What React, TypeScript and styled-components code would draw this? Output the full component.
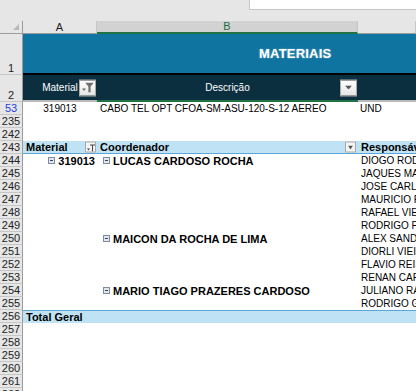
import React from "react";
import styled, { createGlobalStyle, css } from "styled-components";

const GlobalStyle = createGlobalStyle`
  html, body {
    margin: 0;
    padding: 0;
    background: #ffffff;
    overflow: hidden;
  }
  body {
    font-family: "Liberation Sans", Arial, sans-serif;
  }
`;

const COLS = "23px 74px 261px 1fr";

const Window = styled.div`
  width: 416px;
  height: 391px;
  overflow: hidden;
  background: #ffffff;
`;

const TopBar = styled.div`
  height: 21px;
  background: #e6e6e6;
  display: flex;
  justify-content: flex-end;
`;

const FormulaBox = styled.div`
  width: 166px;
  height: 9px;
  background: #ffffff;
  border-left: 1px solid #c6c6c6;
  border-bottom: 1px solid #c6c6c6;
`;

const ColHeaderRow = styled.div`
  display: grid;
  grid-template-columns: ${COLS};
  height: 12px;
  background: #e6e6e6;
`;

const Corner = styled.div`
  position: relative;
  border-right: 1px solid #9b9b9b;
  border-bottom: 1px solid #9b9b9b;
  &::after {
    content: "";
    position: absolute;
    right: 3px;
    bottom: 3px;
    border-style: solid;
    border-width: 0 0 6px 6px;
    border-color: transparent transparent #b8b8b8 transparent;
  }
`;

const ColHead = styled.div<{ $selected?: boolean }>`
  display: flex;
  align-items: center;
  justify-content: center;
  font-size: 11px;
  line-height: 11px;
  color: #222;
  border-right: 1px solid #c6c6c6;
  border-bottom: 1px solid #9b9b9b;
  ${({ $selected }) =>
    $selected &&
    css`
      background: #d2d2d2;
      color: #1e6b3f;
      border-bottom: 2px solid #217346;
    `}
`;

const Row = styled.div<{ $h: number; $bg?: string }>`
  display: grid;
  grid-template-columns: ${COLS};
  height: ${({ $h }) => $h}px;
  background: ${({ $bg }) => $bg || "#ffffff"};
  box-sizing: border-box;
`;

const RowHead = styled.div<{ $blue?: boolean; $bottom?: boolean }>`
  background: #e6e6e6;
  border-right: 1px solid #9b9b9b;
  border-bottom: 1px solid #c6c6c6;
  font-size: 11px;
  color: ${({ $blue }) => ($blue ? "#1f3fe0" : "#222")};
  display: flex;
  justify-content: center;
  align-items: ${({ $bottom }) => ($bottom ? "flex-end" : "center")};
  line-height: 12px;
  box-sizing: border-box;
`;

const Cell = styled.div<{
  $align?: "left" | "center" | "right";
  $bold?: boolean;
  $color?: string;
  $pad?: number;
  $line?: string;
  $top?: string;
}>`
  display: flex;
  align-items: center;
  justify-content: ${({ $align }) =>
    $align === "center" ? "center" : $align === "right" ? "flex-end" : "flex-start"};
  gap: 3px;
  padding: 0 ${({ $pad }) => $pad ?? 3}px;
  font-size: ${({ $bold }) => ($bold ? 11 : 10)}px;
  font-weight: ${({ $bold }) => ($bold ? 700 : 400)};
  color: ${({ $color }) => $color || "#000"};
  white-space: nowrap;
  overflow: hidden;
  position: relative;
  min-width: 0;
  box-sizing: border-box;
  border-bottom: ${({ $line }) => $line || "none"};
  border-top: ${({ $top }) => $top || "none"};
`;

const TitleCell = styled.div`
  grid-column: 2 / -1;
  display: flex;
  align-items: center;
  padding-left: 236px;
  font-size: 13px;
  font-weight: 700;
  color: #ffffff;
  letter-spacing: 0.2px;
  text-shadow: 0 0 2px rgba(255, 255, 255, 0.45);
  border-bottom: 2px solid #000000;
  white-space: nowrap;
`;

const HeadCell = styled.div<{ $green?: boolean }>`
  position: relative;
  display: flex;
  align-items: center;
  justify-content: center;
  font-size: 10px;
  color: #ffffff;
  border-bottom: 2px solid ${({ $green }) => ($green ? "#217346" : "#b9b9b9")};
  white-space: nowrap;
`;

const DropButton = styled.div<{ $size: number; $light?: boolean }>`
  position: absolute;
  right: 1px;
  top: 50%;
  transform: translateY(-50%);
  width: ${({ $size }) => $size}px;
  height: ${({ $size }) => $size}px;
  box-sizing: border-box;
  border: 1px solid #a9a9a9;
  background: ${({ $light }) =>
    $light ? "#f4f4f4" : "linear-gradient(#ffffff, #e4e4e4)"};
  display: flex;
  align-items: center;
  justify-content: center;
`;

const Toggle = styled.span`
  display: inline-flex;
  width: 7px;
  height: 7px;
  box-sizing: border-box;
  border: 1px solid #7d8ca0;
  background: #dfe6ef;
  align-items: center;
  justify-content: center;
  flex-shrink: 0;
  &::after {
    content: "";
    width: 3px;
    height: 1px;
    background: #3a4656;
  }
`;

const Spacer = styled.div``;

const FilterIcon = ({ small }: { small?: boolean }) =>
  small ? (
    <svg width="8" height="8" viewBox="0 0 8 8">
      <path d="M3 1h5v1H6v6H5V2H3z" fill="#444" />
      <path d="M0 5h3L1.5 7z" fill="#444" />
    </svg>
  ) : (
    <svg width="12" height="10" viewBox="0 0 12 10">
      <path d="M3 0h9L8.6 4v6H6.4V4z" fill="#6f6f6f" />
      <path d="M0 6h4L2 8.5z" fill="#6f6f6f" />
    </svg>
  );

const Arrow = ({ w = 7 }: { w?: number }) => (
  <svg width={w} height={4} viewBox={`0 0 ${w} 4`}>
    <path d={`M0 0h${w}L${w / 2} 4z`} fill="#555" />
  </svg>
);

const BLUE = "#bfe3f4";
const BLUE_LINE = "1px solid #5ba6d8";

type PivotRow = {
  n: number;
  mat?: string;
  coord?: string;
  resp: string;
};

const pivot: PivotRow[] = [
  { n: 244, mat: "319013", coord: "LUCAS CARDOSO ROCHA", resp: "DIOGO RODRIGUES" },
  { n: 245, resp: "JAQUES MARTINS" },
  { n: 246, resp: "JOSE CARLOS SILVA" },
  { n: 247, resp: "MAURICIO FERREIRA" },
  { n: 248, resp: "RAFAEL VIEIRA" },
  { n: 249, resp: "RODRIGO PEREIRA" },
  { n: 250, coord: "MAICON DA ROCHA DE LIMA", resp: "ALEX SANDRO" },
  { n: 251, resp: "DIORLI VIEIRA" },
  { n: 252, resp: "FLAVIO REIS" },
  { n: 253, resp: "RENAN CARVALHO" },
  { n: 254, coord: "MARIO TIAGO PRAZERES CARDOSO", resp: "JULIANO RAMOS" },
  { n: 255, resp: "RODRIGO GOMES" },
];

const App = () => {
  return (
    <Window>
      <GlobalStyle />
      <TopBar>
        <FormulaBox />
      </TopBar>
      <ColHeaderRow>
        <Corner />
        <ColHead>A</ColHead>
        <ColHead $selected>B</ColHead>
        <ColHead />
      </ColHeaderRow>

      <Row $h={42} $bg="#0f74a0">
        <RowHead $bottom>1</RowHead>
        <TitleCell>MATERIAIS</TitleCell>
      </Row>
      <Row $h={27} $bg="#0c2f40">
        <RowHead $bottom>2</RowHead>
        <HeadCell>
          Material
          <DropButton $size={17}>
            <FilterIcon />
          </DropButton>
        </HeadCell>
        <HeadCell $green>
          Descrição
          <DropButton $size={17}>
            <Arrow />
          </DropButton>
        </HeadCell>
        <HeadCell />
      </Row>

      <Row $h={13}>
        <RowHead $blue>53</RowHead>
        <Cell $align="center">319013</Cell>
        <Cell>CABO TEL OPT CFOA-SM-ASU-120-S-12 AEREO</Cell>
        <Cell $pad={2}>UND</Cell>
      </Row>
      <Row $h={13}>
        <RowHead>235</RowHead>
        <Spacer />
        <Spacer />
        <Spacer />
      </Row>
      <Row $h={13}>
        <RowHead>242</RowHead>
        <Spacer />
        <Spacer />
        <Spacer />
      </Row>
      <Row $h={13} $bg={BLUE}>
        <RowHead>243</RowHead>
        <Cell $bold $line={BLUE_LINE}>
          Material
          <DropButton $size={11} $light>
            <FilterIcon small />
          </DropButton>
        </Cell>
        <Cell $bold $line={BLUE_LINE}>
          Coordenador
          <DropButton $size={11} $light style={{ right: 2 }}>
            <Arrow w={5} />
          </DropButton>
        </Cell>
        <Cell $bold $line={BLUE_LINE}>
          Responsável
        </Cell>
      </Row>
      {pivot.map((r) => (
        <Row $h={13} key={r.n}>
          <RowHead>{r.n}</RowHead>
          <Cell $bold $align="right" $pad={2}>
            {r.mat && (
              <>
                <Toggle />
                {r.mat}
              </>
            )}
          </Cell>
          <Cell $bold $pad={6}>
            {r.coord && (
              <>
                <Toggle />
                {r.coord}
              </>
            )}
          </Cell>
          <Cell>{r.resp}</Cell>
        </Row>
      ))}
      <Row $h={13} $bg={BLUE}>
        <RowHead>256</RowHead>
        <Cell $bold $top={BLUE_LINE}>
          Total Geral
        </Cell>
        <Cell $top={BLUE_LINE} />
        <Cell $top={BLUE_LINE} />
      </Row>
      {[257, 258, 259, 260, 261, 262].map((n) => (
        <Row $h={13} key={n}>
          <RowHead>{n}</RowHead>
          <Spacer />
          <Spacer />
          <Spacer />
        </Row>
      ))}
    </Window>
  );
};

export default App;
